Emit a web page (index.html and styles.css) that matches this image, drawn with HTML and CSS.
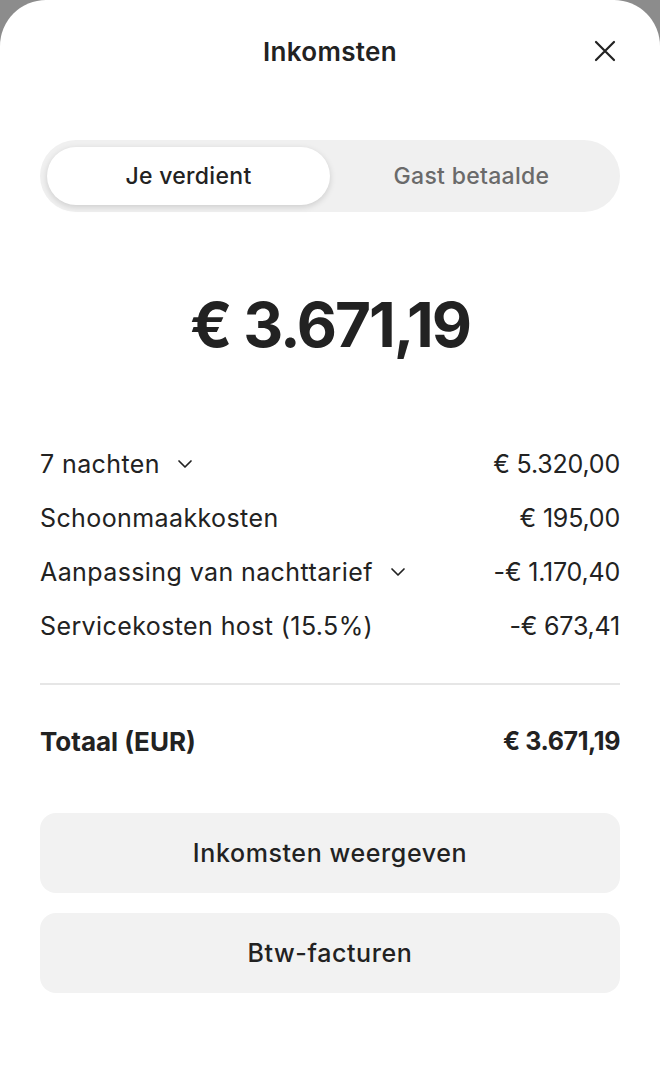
FILE: index.html
```html
<!DOCTYPE html>
<html lang="nl">
<head>
    <meta charset="UTF-8">
    <meta name="viewport" content="width=device-width, initial-scale=1.0">
    <title>Inkomsten</title>
    <link rel="stylesheet" href="styles.css">
</head>
<body>
    <div class="sheet">
        <header class="sheet-header">
            <h1>Inkomsten</h1>
            <button class="close" aria-label="Sluiten">
                <svg width="22" height="22" viewBox="0 0 22 22" fill="none" stroke="#222" stroke-width="2.2" stroke-linecap="round">
                    <path d="M2 2 L20 20 M20 2 L2 20"/>
                </svg>
            </button>
        </header>

        <div class="tabs">
            <div class="tab active">Je verdient</div>
            <div class="tab">Gast betaalde</div>
        </div>

        <div class="amount">€ 3.671,19</div>

        <div class="lines">
            <div class="line">
                <span class="label">7 nachten <svg class="chev" width="16" height="10" viewBox="0 0 16 10" fill="none" stroke="#222" stroke-width="1.7" stroke-linecap="round" stroke-linejoin="round"><path d="M2 2 L8 8 L14 2"/></svg></span>
                <span class="value">€ 5.320,00</span>
            </div>
            <div class="line">
                <span class="label">Schoonmaakkosten</span>
                <span class="value">€ 195,00</span>
            </div>
            <div class="line">
                <span class="label">Aanpassing van nachttarief <svg class="chev" width="16" height="10" viewBox="0 0 16 10" fill="none" stroke="#222" stroke-width="1.7" stroke-linecap="round" stroke-linejoin="round"><path d="M2 2 L8 8 L14 2"/></svg></span>
                <span class="value">-€ 1.170,40</span>
            </div>
            <div class="line">
                <span class="label">Servicekosten host (15.5%)</span>
                <span class="value">-€ 673,41</span>
            </div>
        </div>

        <div class="divider"></div>

        <div class="line total">
            <span>Totaal (EUR)</span>
            <span class="value">€ 3.671,19</span>
        </div>

        <div class="actions">
            <button class="action">Inkomsten weergeven</button>
            <button class="action">Btw-facturen</button>
        </div>
    </div>
</body>
</html>
```

FILE: styles.css
```css
html, body {
    height: 100%;
}
body {
    margin: 0;
    background-color: #8c8c8c;
    font-family: Inter, "Noto Sans", sans-serif;
    color: #222222;
}
.sheet {
    box-sizing: border-box;
    min-height: 100%;
    background-color: #ffffff;
    border-radius: 46px 46px 0 0;
    padding: 0 40px;
}
.sheet-header {
    position: relative;
    height: 102px;
    display: flex;
    align-items: center;
    justify-content: center;
}
.sheet-header h1 {
    margin: 0;
    font-size: 26px;
    font-weight: 600;
    letter-spacing: 0.3px;
}
.close {
    position: absolute;
    right: 4px;
    top: 40px;
    border: none;
    background: none;
    padding: 0;
    width: 22px;
    height: 22px;
    cursor: pointer;
}
.tabs {
    margin-top: 38px;
    height: 72px;
    box-sizing: border-box;
    padding: 7px;
    border-radius: 36px;
    background-color: #f0f0f0;
    display: grid;
    grid-template-columns: 1fr 1fr;
}
.tab {
    display: flex;
    align-items: center;
    justify-content: center;
    border-radius: 30px;
    font-size: 23px;
    font-weight: 500;
    letter-spacing: 0.3px;
    color: #6a6a6a;
}
.tab.active {
    background-color: #ffffff;
    color: #222222;
    box-shadow: 0 2px 6px rgba(0, 0, 0, 0.15);
}
.amount {
    margin-top: 73px;
    height: 80px;
    line-height: 80px;
    text-align: center;
    font-size: 62px;
    font-weight: 700;
    letter-spacing: -2px;
}
.lines {
    margin-top: 72px;
}
.line {
    height: 54px;
    display: flex;
    align-items: center;
    justify-content: space-between;
    font-size: 25px;
    letter-spacing: 0.4px;
}
.line .value {
    letter-spacing: -0.2px;
}
.label {
    display: flex;
    align-items: center;
}
.chev {
    margin-left: 17px;
}
.divider {
    margin-top: 30px;
    height: 2px;
    background-color: #e6e6e6;
}
.total {
    margin-top: 29px;
    font-weight: 700;
    font-size: 26px;
    letter-spacing: 0;
}
.total .value {
    font-size: 25px;
    letter-spacing: -0.4px;
}
.actions {
    margin-top: 45px;
    display: flex;
    flex-direction: column;
    gap: 20px;
}
.action {
    height: 80px;
    border: none;
    border-radius: 16px;
    background-color: #f2f2f2;
    font-family: inherit;
    font-size: 25px;
    font-weight: 500;
    letter-spacing: 0.6px;
    color: #222222;
    cursor: pointer;
}
```
